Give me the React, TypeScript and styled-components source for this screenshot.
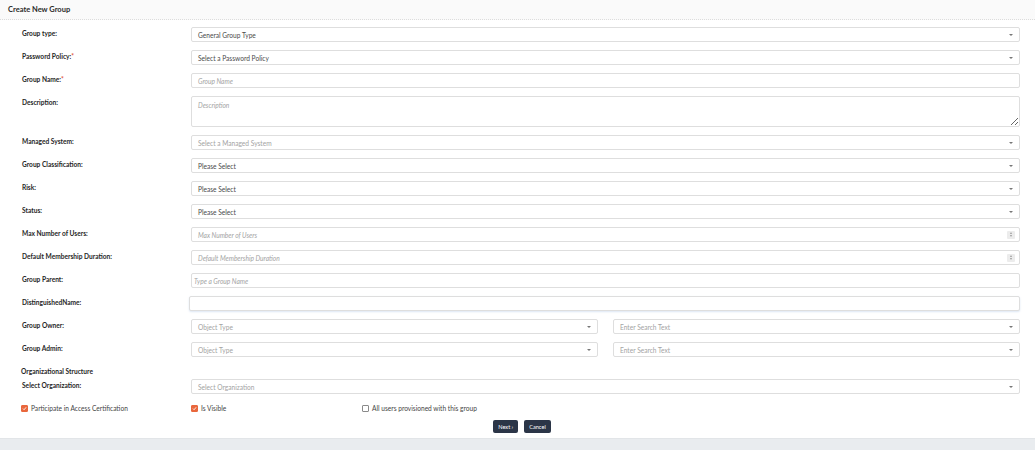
import React from "react";
import styled, { createGlobalStyle } from "styled-components";

const GlobalStyle = createGlobalStyle`
  html, body {
    margin: 0;
    padding: 0;
    background: #fff;
    font-family: "Lato", "Liberation Sans", sans-serif;
    color: #333;
  }
  * {
    box-sizing: border-box;
  }
`;

const Page = styled.div`
  width: 1035px;
  height: 450px;
  display: flex;
  flex-direction: column;
  background: #fff;
  overflow: hidden;
`;

const Header = styled.div`
  height: 20px;
  display: flex;
  align-items: center;
  padding: 0 8px;
  background: #fafafa;
  border-bottom: 1px dotted #dcdcdc;
  font-size: 7.5px;
  font-weight: 700;
  color: #2a2a2a;
`;

const Body = styled.div`
  flex: 1;
  display: flex;
  flex-direction: column;
  gap: 8px;
  padding: 7px 15px 0 22px;
`;

const Row = styled.div`
  display: grid;
  grid-template-columns: 169px 1fr;
  align-items: start;
`;

const Label = styled.div`
  font-size: 6.6px;
  font-weight: 700;
  color: #262626;
  padding-top: 2px;
  white-space: nowrap;
`;

const Req = styled.span`
  color: #e0523a;
`;

const Field = styled.div`
  height: 15px;
  display: flex;
  align-items: center;
  padding: 0 6px;
  border: 1px solid #dedede;
  border-radius: 2px;
  background: #fff;
  font-size: 6.6px;
  color: #555;
`;

const FieldText = styled.span<{ $muted?: boolean; $italic?: boolean }>`
  flex: 1;
  color: ${(p) => (p.$muted ? "#a3a3a3" : "#4a4a4a")};
  font-style: ${(p) => (p.$italic ? "italic" : "normal")};
  white-space: nowrap;
`;

const ParentField = styled(Field)`
  padding-left: 2px;
`;

const Caret = styled.span`
  width: 0;
  height: 0;
  border-left: 2px solid transparent;
  border-right: 2px solid transparent;
  border-top: 2.5px solid #777;
`;

const TextArea = styled.textarea`
  display: block;
  width: 100%;
  height: 31px;
  padding: 4px 6px;
  border: 1px solid #dedede;
  border-radius: 2px;
  font-family: inherit;
  font-size: 6.6px;
  resize: vertical;
  outline: none;
  &::placeholder {
    color: #a3a3a3;
    font-style: italic;
  }
`;

const Spinner = styled.span`
  width: 8px;
  height: 8px;
  margin-right: -2px;
  display: flex;
  flex-direction: column;
  align-items: center;
  justify-content: center;
  gap: 1px;
  background: #ececec;
  border-radius: 1px;
`;

const SpinArrow = styled.span<{ $up?: boolean }>`
  width: 0;
  height: 0;
  border-left: 1.5px solid transparent;
  border-right: 1.5px solid transparent;
  ${(p) =>
    p.$up
      ? "border-bottom: 2px solid #9a9a9a;"
      : "border-top: 2px solid #9a9a9a;"}
`;

const Pair = styled.div`
  display: grid;
  grid-template-columns: 1fr 1fr;
  column-gap: 15px;
`;

const FocusField = styled(Field)`
  margin-left: -2px;
  box-shadow: 0 1px 2px rgba(120, 160, 210, 0.25);
`;

const SectionTitle = styled.div`
  font-size: 6.6px;
  font-weight: 700;
  color: #262626;
  margin: 2px 0 -4px -1px;
`;

const CheckRow = styled.div`
  display: grid;
  grid-template-columns: 170px 171px 1fr;
  align-items: center;
  margin: 2px 0 0 -1px;
`;

const CheckItem = styled.label`
  display: flex;
  align-items: center;
  gap: 3px;
  font-size: 6.6px;
  color: #444;
`;

const Box = styled.span<{ $checked?: boolean }>`
  width: 7px;
  height: 7px;
  border-radius: 1px;
  display: flex;
  align-items: center;
  justify-content: center;
  background: ${(p) => (p.$checked ? "#e9673d" : "#fff")};
  border: 1px solid ${(p) => (p.$checked ? "#e9673d" : "#8a8a8a")};
`;

const Actions = styled.div`
  display: flex;
  justify-content: center;
  gap: 6px;
  padding-left: 2px;
`;

const Button = styled.button`
  height: 13px;
  padding: 0 5px;
  border: none;
  border-radius: 2px;
  background: #2b3547;
  color: #fff;
  font-family: inherit;
  font-size: 5.6px;
  display: flex;
  align-items: center;
`;

const Footer = styled.div`
  height: 12px;
  background: #e9ecef;
  border-top: 1px solid #e2e5e8;
`;

const Tick = () => (
  <svg width="5" height="5" viewBox="0 0 10 10">
    <path d="M2 5.2 L4.2 7.4 L8.2 2.6" fill="none" stroke="#fff" strokeWidth="1.8" />
  </svg>
);

const SelectBox: React.FC<{ text: string; muted?: boolean }> = ({ text, muted }) => (
  <Field>
    <FieldText $muted={muted}>{text}</FieldText>
    <Caret />
  </Field>
);

const NumberBox: React.FC<{ placeholder: string }> = ({ placeholder }) => (
  <Field>
    <FieldText $muted $italic>
      {placeholder}
    </FieldText>
    <Spinner>
      <SpinArrow $up />
      <SpinArrow />
    </Spinner>
  </Field>
);

export default function App() {
  return (
    <Page>
      <GlobalStyle />
      <Header>Create New Group</Header>
      <Body>
        <Row>
          <Label>Group type:</Label>
          <SelectBox text="General Group Type" />
        </Row>
        <Row>
          <Label>
            Password Policy:<Req>*</Req>
          </Label>
          <SelectBox text="Select a Password Policy" />
        </Row>
        <Row>
          <Label>
            Group Name:<Req>*</Req>
          </Label>
          <Field>
            <FieldText $muted $italic>
              Group Name
            </FieldText>
          </Field>
        </Row>
        <Row>
          <Label>Description:</Label>
          <TextArea placeholder="Description" />
        </Row>
        <Row>
          <Label>Managed System:</Label>
          <SelectBox text="Select a Managed System" muted />
        </Row>
        <Row>
          <Label>Group Classification:</Label>
          <SelectBox text="Please Select" />
        </Row>
        <Row>
          <Label>Risk:</Label>
          <SelectBox text="Please Select" />
        </Row>
        <Row>
          <Label>Status:</Label>
          <SelectBox text="Please Select" />
        </Row>
        <Row>
          <Label>Max Number of Users:</Label>
          <NumberBox placeholder="Max Number of Users" />
        </Row>
        <Row>
          <Label>Default Membership Duration:</Label>
          <NumberBox placeholder="Default Membership Duration" />
        </Row>
        <Row>
          <Label>Group Parent:</Label>
          <ParentField>
            <FieldText $muted $italic>
              Type a Group Name
            </FieldText>
          </ParentField>
        </Row>
        <Row>
          <Label>DistinguishedName:</Label>
          <FocusField />
        </Row>
        <Row>
          <Label>Group Owner:</Label>
          <Pair>
            <SelectBox text="Object Type" muted />
            <SelectBox text="Enter Search Text" muted />
          </Pair>
        </Row>
        <Row>
          <Label>Group Admin:</Label>
          <Pair>
            <SelectBox text="Object Type" muted />
            <SelectBox text="Enter Search Text" muted />
          </Pair>
        </Row>
        <SectionTitle>Organizational Structure</SectionTitle>
        <Row>
          <Label>Select Organization:</Label>
          <SelectBox text="Select Organization" muted />
        </Row>
        <CheckRow>
          <CheckItem>
            <Box $checked>
              <Tick />
            </Box>
            Participate in Access Certification
          </CheckItem>
          <CheckItem>
            <Box $checked>
              <Tick />
            </Box>
            Is Visible
          </CheckItem>
          <CheckItem>
            <Box />
            All users provisioned with this group
          </CheckItem>
        </CheckRow>
        <Actions>
          <Button>Next ›</Button>
          <Button>Cancel</Button>
        </Actions>
      </Body>
      <Footer />
    </Page>
  );
}
